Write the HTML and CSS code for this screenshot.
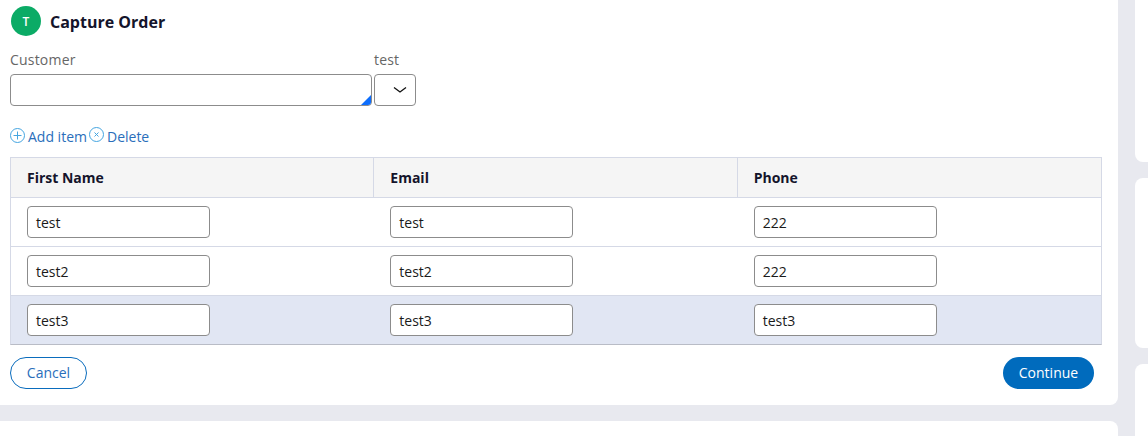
FILE: index.html
```html
<!DOCTYPE html>
<html lang="en">
<head>
<meta charset="utf-8">
<title>Capture Order</title>
<link rel="stylesheet" href="styles.css">
</head>
<body>
<div class="page">
  <div class="main-col">
    <section class="card main-card">
      <header class="title-row">
        <span class="avatar">T</span>
        <h1 class="title">Capture Order</h1>
      </header>
      <div class="fields">
        <div class="field">
          <label class="label">Customer</label>
          <div class="text-box customer"><span class="corner"></span></div>
        </div>
        <div class="field">
          <label class="label">test</label>
          <div class="text-box select">
            <svg class="chevron" width="14" height="8" viewBox="0 0 14 8"><path d="M1 1.5 7 6 13 1.5" fill="none" stroke="#111" stroke-width="1.3"/></svg>
          </div>
        </div>
      </div>
      <div class="links">
        <a class="link">
          <svg class="link-icon" width="15" height="15" viewBox="0 0 15 15"><circle cx="7.5" cy="7.5" r="7" fill="none" stroke="#45a5e0" stroke-width="1"/><path d="M7.5 3.5v8M3.5 7.5h8" stroke="#45a5e0" stroke-width="1" fill="none"/></svg>
          <span>Add item</span>
        </a>
        <a class="link">
          <svg class="link-icon raised" width="15" height="15" viewBox="0 0 15 15"><circle cx="7.5" cy="7.5" r="7" fill="none" stroke="#45a5e0" stroke-width="1"/><path d="M5.5 5.5l4 4M9.5 5.5l-4 4" stroke="#45a5e0" stroke-width="1" fill="none"/></svg>
          <span>Delete</span>
        </a>
      </div>
      <div class="table">
        <div class="row head">
          <div class="cell">First Name</div>
          <div class="cell">Email</div>
          <div class="cell">Phone</div>
        </div>
        <div class="row">
          <div class="cell"><div class="text-box inp">test</div></div>
          <div class="cell"><div class="text-box inp">test</div></div>
          <div class="cell"><div class="text-box inp">222</div></div>
        </div>
        <div class="row">
          <div class="cell"><div class="text-box inp">test2</div></div>
          <div class="cell"><div class="text-box inp">test2</div></div>
          <div class="cell"><div class="text-box inp">222</div></div>
        </div>
        <div class="row selected">
          <div class="cell"><div class="text-box inp">test3</div></div>
          <div class="cell"><div class="text-box inp">test3</div></div>
          <div class="cell"><div class="text-box inp">test3</div></div>
        </div>
      </div>
      <div class="actions">
        <button class="btn secondary">Cancel</button>
        <button class="btn primary">Continue</button>
      </div>
    </section>
    <section class="card lower-card"></section>
  </div>
  <aside class="side-col">
    <div class="card side-a"></div>
    <div class="card side-b"></div>
    <div class="card side-c"></div>
  </aside>
</div>
</body>
</html>
```
FILE: styles.css
```css
* { box-sizing: border-box; }
html, body { margin: 0; height: 100%; overflow: hidden; }
body {
  background: #e8e9ef;
  font-family: "Open Sans", "Liberation Sans", sans-serif;
  font-size: 14px;
  color: #1a1a2e;
}
.page {
  display: grid;
  grid-template-columns: 1118px 13px;
  column-gap: 17px;
  height: 436px;
  overflow: hidden;
}
.main-col, .side-col {
  display: flex;
  flex-direction: column;
  gap: 16px;
  min-height: 0;
}
.card { background: #fff; }
.main-card {
  height: 405px;
  flex: none;
  border-radius: 0 0 8px 0;
  padding: 6px 16px 0 10px;
}
.lower-card {
  flex: 1;
  border-radius: 0 8px 0 0;
}
.side-a { height: 162px; flex: none; border-radius: 0 0 0 8px; }
.side-b { height: 170px; flex: none; border-radius: 8px 0 0 8px; }
.side-c { flex: 1; border-radius: 8px 0 0 0; }

.title-row {
  display: flex;
  align-items: center;
  gap: 9px;
  height: 30px;
  padding-left: 1px;
}
.avatar {
  width: 30px;
  height: 30px;
  border-radius: 50%;
  background: #0bab66;
  color: #fff;
  font-size: 12px;
  font-weight: 600;
  display: flex;
  align-items: center;
  justify-content: center;
}
.title {
  margin: 2px 0 0;
  font-size: 16px;
  line-height: 22px;
  font-weight: 700;
  color: #14142b;
}

.fields {
  display: flex;
  gap: 2px;
  margin-top: 14px;
}
.field { display: flex; flex-direction: column; }
.label {
  font-size: 14px;
  line-height: 20px;
  height: 24px;
  color: #666;
  letter-spacing: 0.2px;
}
.text-box {
  height: 32px;
  background: #fff;
  border: 1px solid #8c8c8c;
  border-radius: 4px;
  position: relative;
}
.customer { width: 362px; overflow: hidden; }
.corner {
  position: absolute;
  right: 0;
  bottom: 0;
  width: 0;
  height: 0;
  border-style: solid;
  border-width: 0 0 10px 10px;
  border-color: transparent transparent #0d6efd transparent;
}
.select {
  width: 42px;
  display: flex;
  align-items: center;
  justify-content: flex-end;
  padding-right: 8px;
}

.links {
  display: flex;
  align-items: center;
  gap: 2px;
  margin-top: 20px;
  height: 21px;
}
.link {
  display: flex;
  align-items: center;
  gap: 3px;
  color: #2a6ebb;
  font-size: 14px;
  line-height: 20px;
}
.link-icon { flex: none; margin-top: -3px; }
.link-icon.raised { margin-top: -5px; }

.table {
  margin-top: 10px;
  border: 1px solid #d5d9e6;
  border-bottom-color: #b9bcc6;
}
.row {
  display: grid;
  grid-template-columns: 1fr 1fr 1fr;
  height: 49px;
  border-top: 1px solid #d5d9e6;
}
.row:first-child { border-top: 0; height: 39px; }
.head { background: #f5f5f5; font-weight: 700; color: #14142b; }
.head .cell {
  display: flex;
  align-items: center;
  border-right: 1px solid #d5d9e6;
}
.head .cell:last-child { border-right: 0; }
.cell { padding: 8px 16px; }
.selected { background: #e1e6f3; }
.inp {
  width: 183px;
  padding: 0 8px;
  line-height: 32px;
  color: #1a1a1a;
}

.actions {
  display: flex;
  justify-content: space-between;
  margin-top: 12px;
  padding-right: 8px;
}
.btn {
  height: 32px;
  border-radius: 16px;
  font-family: inherit;
  font-size: 14px;
  padding: 0 0 1px;
}
.secondary {
  width: 77px;
  background: #fff;
  border: 1px solid #0a6cbd;
  color: #2a6ebb;
}
.primary {
  width: 91px;
  background: #006bbd;
  border: 0;
  color: #fff;
}
```
